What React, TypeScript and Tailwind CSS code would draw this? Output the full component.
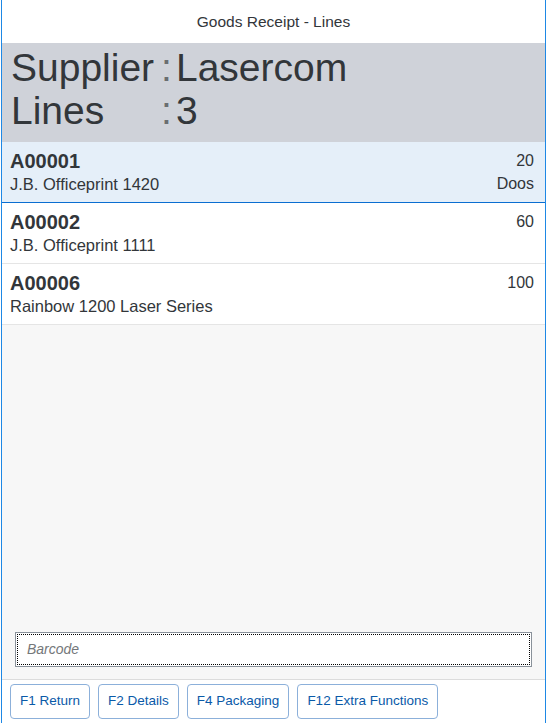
const lines = [
  { id: 'A00001', desc: 'J.B. Officeprint 1420', qty: '20', unit: 'Doos', selected: true },
  { id: 'A00002', desc: 'J.B. Officeprint 1111', qty: '60', unit: '', selected: false },
  { id: 'A00006', desc: 'Rainbow 1200 Laser Series', qty: '100', unit: '', selected: false },
];

const buttons = ['F1 Return', 'F2 Details', 'F4 Packaging', 'F12 Extra Functions'];

export default function App() {
  return (
    <div className="h-[723px] w-[547px] bg-white pl-px font-['Liberation_Sans',Arial,sans-serif] text-[#32363a]">
      <div className="flex h-full w-[545px] flex-col border-x border-[#1e88e5]">
        {/* title bar */}
        <div className="flex h-[43px] shrink-0 items-center justify-center bg-white text-[15.5px]">
          Goods Receipt - Lines
        </div>

        {/* header info */}
        <div className="h-[99px] shrink-0 bg-[#cfd2d9] px-[9px] pt-[3px] text-[39px] leading-[43px]">
          <div className="grid grid-cols-[auto_auto_1fr]">
            <span>Supplier</span>
            <span className="ml-[7px] mr-[4px] text-[#6a6d70]">:</span>
            <span>Lasercom</span>
            <span>Lines</span>
            <span className="ml-[7px] mr-[4px] text-[#6a6d70]">:</span>
            <span>3</span>
          </div>
        </div>

        {/* lines list */}
        <div className="flex flex-1 flex-col bg-[#f7f7f7]">
          {lines.map((l) => (
            <div
              key={l.id}
              className={
                l.selected
                  ? 'flex h-[61px] justify-between border-b border-[#0a6ed1] bg-[#e5eff9] pl-[8px] pr-[11px] pt-[8px]'
                  : 'flex h-[61px] justify-between border-b border-[#e5e5e5] bg-white pl-[8px] pr-[11px] pt-[8px]'
              }
            >
              <div>
                <div className="text-[20px] font-bold leading-[23px]">{l.id}</div>
                <div className="text-[16.5px] leading-[22px]">{l.desc}</div>
              </div>
              <div className="text-right text-[16px] leading-[23px]">
                <div className="-mt-[1px]">{l.qty}</div>
                {l.unit && <div>{l.unit}</div>}
              </div>
            </div>
          ))}

          <div className="flex-1" />

          <div className="px-[13px] pb-[12px]">
            <div className="h-[35px] border border-[#89919a] bg-white p-px">
              <div className="flex h-full items-center border border-dotted border-black px-[9px] text-[14px] italic text-[#74777a]">
                Barcode
              </div>
            </div>
          </div>
        </div>

        {/* footer buttons */}
        <div className="flex h-[44px] shrink-0 gap-[8px] border-t border-[#dcdcdc] bg-white px-[8px] pt-[4px]">
          {buttons.map((b) => (
            <div
              key={b}
              className="flex h-[35px] items-center rounded-[4px] border border-[#8cb0da] px-[9px] text-[13.5px] text-[#0a5aa8]"
            >
              {b}
            </div>
          ))}
        </div>
      </div>
    </div>
  );
}
